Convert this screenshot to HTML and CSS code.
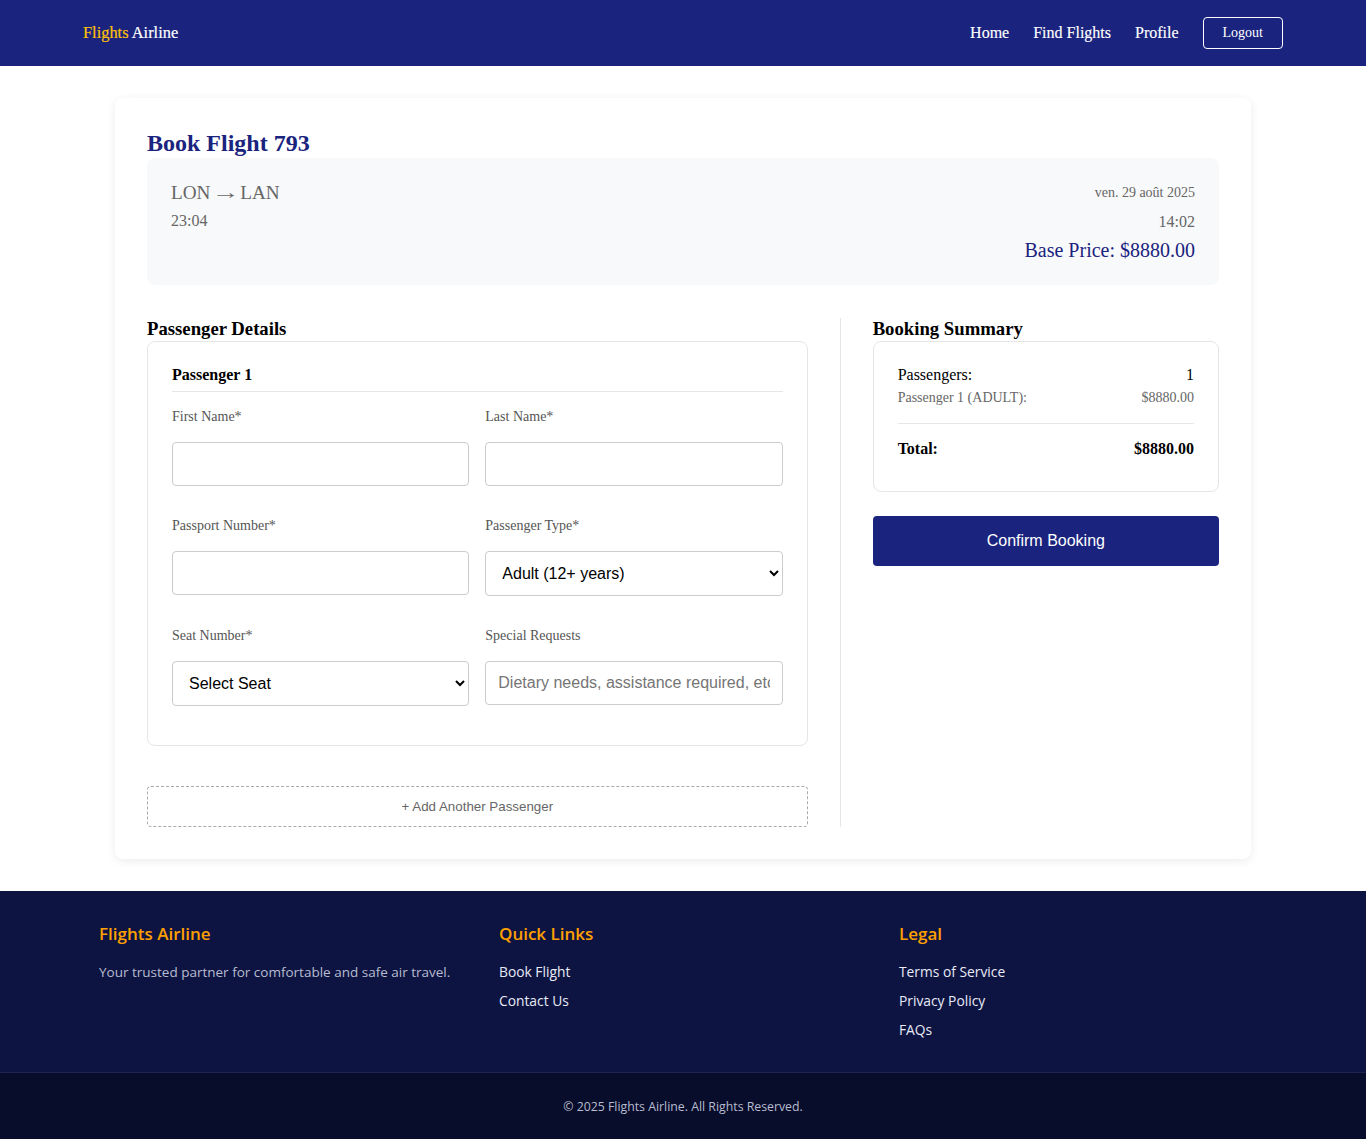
FILE: index.html
```html
<!DOCTYPE html>
<html lang="en">
<head>
<meta charset="utf-8">
<title>Book Flight 793 - Flights Airline</title>
<link rel="stylesheet" href="styles.css">
</head>
<body>
<header class="navbar">
  <div class="nav-inner">
    <a class="logo" href="#"><span class="logo-accent">Flights</span> Airline</a>
    <nav class="nav-links">
      <a href="#">Home</a>
      <a href="#">Find Flights</a>
      <a href="#">Profile</a>
      <button class="logout">Logout</button>
    </nav>
  </div>
</header>

<main class="main">
  <div class="card">
    <h2 class="title">Book Flight 793</h2>
    <div class="flight-info">
      <div class="fi-left">
        <h3 class="route">LON <span class="arrow">→</span> LAN</h3>
        <p class="time">23:04</p>
      </div>
      <div class="fi-right">
        <p class="date">ven. 29 août 2025</p>
        <p class="time">14:02</p>
        <p class="price">Base Price: $8880.00</p>
      </div>
    </div>

    <div class="booking-grid">
      <section class="passengers">
        <h3 class="section-title">Passenger Details</h3>
        <div class="pcard">
          <h4 class="pcard-title">Passenger 1</h4>
          <div class="form-grid">
            <div class="group">
              <label>First Name*</label>
              <input type="text">
            </div>
            <div class="group">
              <label>Last Name*</label>
              <input type="text">
            </div>
            <div class="group">
              <label>Passport Number*</label>
              <input type="text">
            </div>
            <div class="group">
              <label>Passenger Type*</label>
              <select><option>Adult (12+ years)</option></select>
            </div>
            <div class="group">
              <label>Seat Number*</label>
              <select><option>Select Seat</option></select>
            </div>
            <div class="group">
              <label>Special Requests</label>
              <input type="text" placeholder="Dietary needs, assistance required, etc.">
            </div>
          </div>
        </div>
        <button class="add-btn">+ Add Another Passenger</button>
      </section>

      <aside class="summary">
        <h3 class="section-title">Booking Summary</h3>
        <div class="scard">
          <div class="srow">
            <span>Passengers:</span><span>1</span>
          </div>
          <div class="srow small">
            <span>Passenger 1 (ADULT):</span><span>$8880.00</span>
          </div>
          <div class="srow total">
            <span>Total:</span><span>$8880.00</span>
          </div>
        </div>
        <button class="confirm">Confirm Booking</button>
      </aside>
    </div>
  </div>
</main>

<footer class="footer">
  <div class="footer-inner">
    <div class="fcol">
      <h3>Flights Airline</h3>
      <p>Your trusted partner for comfortable and safe air travel.</p>
    </div>
    <div class="fcol">
      <h3>Quick Links</h3>
      <ul>
        <li><a href="#">Book Flight</a></li>
        <li><a href="#">Contact Us</a></li>
      </ul>
    </div>
    <div class="fcol">
      <h3>Legal</h3>
      <ul>
        <li><a href="#">Terms of Service</a></li>
        <li><a href="#">Privacy Policy</a></li>
        <li><a href="#">FAQs</a></li>
      </ul>
    </div>
  </div>
  <div class="footer-bottom">
    <p>© 2025 Flights Airline. All Rights Reserved.</p>
  </div>
</footer>
</body>
</html>
```

FILE: styles.css
```css
* { box-sizing: border-box; }

body {
  margin: 0;
  font-family: "Liberation Serif", "Times New Roman", serif;
  color: #000;
  background: #fff;
}

a { text-decoration: none; color: inherit; }

/* Navbar */
.navbar {
  background: #1a237e;
  height: 66px;
}
.nav-inner {
  max-width: 1200px;
  margin: 0 auto;
  height: 100%;
  display: flex;
  align-items: center;
  justify-content: space-between;
}
.logo {
  color: #fff;
  font-size: 16.4px;
  font-weight: 500;
  -webkit-text-stroke: 0.2px currentColor;
}
.logo-accent { color: #ffc107; }
.nav-links {
  display: flex;
  align-items: center;
  gap: 24px;
}
.nav-links a {
  color: #fff;
  font-size: 16px;
  -webkit-text-stroke: 0.15px currentColor;
}
.logout {
  font-family: "Liberation Serif", "Times New Roman", serif;
  font-size: 14px;
  color: #fff;
  background: transparent;
  border: 1px solid #fff;
  border-radius: 4px;
  padding: 7px 19px;
  line-height: 16px;
}

/* Main */
.main {
  max-width: 1200px;
  margin: 0 auto;
  padding: 32px 32px;
}
.card {
  background: #fff;
  border-radius: 8px;
  box-shadow: 0 2px 10px rgba(0, 0, 0, 0.08);
  padding: 31px 32px 32px;
}
.title {
  margin: 0;
  font-size: 24px;
  color: #1a237e;
  line-height: 1.2;
}
.flight-info {
  background: #f8f9fa;
  border-radius: 8px;
  padding: 24px 24px 24px;
  display: flex;
  justify-content: space-between;
  align-items: flex-start;
}
.route {
  margin: 0 0 8px;
  font-size: 19.2px;
  font-weight: normal;
  color: #666;
  line-height: 22px;
  height: 22px;
  word-spacing: -3px;
}
.arrow {
  display: inline-block;
  font-size: 19.2px;
  line-height: 1;
  transform: scaleX(1.45);
  margin: 0 3px 0 4px;
}
.time {
  margin: 0;
  font-size: 16px;
  color: #666;
}
.fi-right { text-align: right; }
.date {
  margin: 3px 0 12px;
  font-size: 14px;
  color: #666;
}
.fi-right .time { margin-bottom: 8px; }
.price {
  margin: 0;
  font-size: 20px;
  color: #1a237e;
  line-height: 22px;
}

/* Booking grid */
.booking-grid {
  margin-top: 33px;
  display: grid;
  grid-template-columns: 660fr 379fr;
  gap: 32px;
}
.section-title {
  margin: 0 0 1px;
  font-size: 18.72px;
}
.pcard {
  border: 1px solid #e6e6e6;
  border-radius: 8px;
  padding: 24px 24px 23px;
}
.pcard-title {
  margin: 0 0 17px;
  padding-bottom: 7px;
  border-bottom: 1px solid #e6e6e6;
  font-size: 16px;
}
.form-grid {
  display: grid;
  grid-template-columns: 1fr 1fr;
  column-gap: 16px;
  row-gap: 16px;
}
.group {
  display: flex;
  flex-direction: column;
  margin-bottom: 16px;
}
.group label {
  font-size: 14px;
  color: #555;
  margin-bottom: 17px;
}
.group input,
.group select {
  font-family: "Liberation Sans", Arial, sans-serif;
  font-size: 16px;
  border: 1px solid #ccc;
  border-radius: 4px;
  padding: 12px;
  background: #fff;
  color: #000;
  width: 100%;
}
.group input { height: 44px; }
.group select { height: 45px; }
.group input::placeholder { color: #757575; }

.add-btn {
  display: block;
  width: 100%;
  margin-top: 40px;
  background: #fff;
  border: 1px dashed #aaa;
  border-radius: 4px;
  padding: 12px;
  font-family: "Liberation Sans", Arial, sans-serif;
  font-size: 13.33px;
  color: #666;
  line-height: 15px;
}

.summary {
  border-left: 1px solid #e6e6e6;
  padding-left: 32px;
}
.scard {
  border: 1px solid #e6e6e6;
  border-radius: 8px;
  padding: 24px 24px 33px;
}
.srow {
  display: flex;
  justify-content: space-between;
  font-size: 16px;
  margin-bottom: 6px;
}
.srow.small {
  font-size: 14px;
  color: #666;
  padding-bottom: 17px;
  border-bottom: 1px solid #e6e6e6;
  margin-bottom: 16px;
}
.srow.total {
  font-weight: bold;
  margin-bottom: 0;
}
.confirm {
  display: block;
  width: 100%;
  margin-top: 24px;
  background: #1a237e;
  color: #fff;
  border: none;
  border-radius: 4px;
  padding: 16px;
  font-family: "Liberation Sans", Arial, sans-serif;
  font-size: 16px;
  line-height: 18px;
}

/* Footer */
.footer {
  background: #0d1442;
  font-family: "Open Sans", "Noto Sans", sans-serif;
}
.footer-inner {
  max-width: 1200px;
  margin: 0 auto;
  padding: 30px 16px 33px;
  display: grid;
  grid-template-columns: repeat(3, 1fr);
  gap: 32px;
}
.fcol h3 {
  margin: 0 0 16px;
  color: #ffa000;
  font-size: 17px;
  font-weight: 600;
  line-height: 24px;
  padding-top: 1px;
}
.fcol p {
  margin: 0;
  font-size: 13.5px;
  color: #b8bcd0;
  line-height: 1.5;
}
.fcol ul {
  list-style: none;
  margin: 0;
  padding: 0;
}
.fcol li {
  margin-bottom: 10px;
  font-size: 13.8px;
  line-height: 19px;
}
.fcol li:last-child { margin-bottom: 0; }
.fcol li a { color: #e8eaf6; }
.footer-bottom {
  background: #080d2b;
  border-top: 1px solid #1e2552;
  text-align: center;
  padding: 25px 0 25px;
}
.footer-bottom p {
  margin: 0;
  font-size: 12.3px;
  color: #b8bcd0;
  line-height: 17px;
}
```
